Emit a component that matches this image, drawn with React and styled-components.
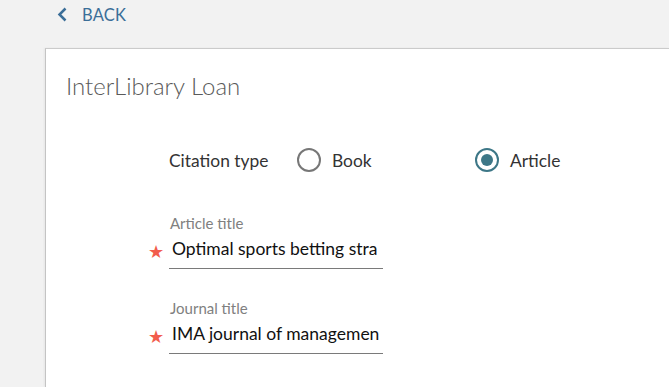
import styled, { createGlobalStyle } from 'styled-components';

const GlobalStyle = createGlobalStyle`
  html, body {
    margin: 0;
    padding: 0;
    background: #f2f2f2;
    font-family: Lato, "Open Sans", "Liberation Sans", sans-serif;
    overflow: hidden;
  }
`;

const Page = styled.div`
  width: 669px;
  height: 387px;
  display: flex;
  flex-direction: column;
`;

const BackBar = styled.div`
  height: 29px;
  padding-left: 57px;
  display: flex;
  align-items: center;
  gap: 14px;
  color: #3b6e98;
  font-size: 16.5px;
  letter-spacing: 0.2px;
`;

const Card = styled.div`
  flex: 1;
  margin: 19px 0 0 45px;
  background: #fff;
  border-top: 1px solid #cbcbcb;
  border-left: 1px solid #c4c4c4;
  box-shadow: -1px 0 2px rgba(0, 0, 0, 0.05);
  padding: 23px 0 0 20px;
`;

const Title = styled.h1`
  margin: 0;
  font-size: 24px;
  font-weight: 300;
  color: #5a5a5a;
  line-height: 28px;
`;

const Form = styled.div`
  margin: 46px 0 0 103px;
  display: flex;
  flex-direction: column;
`;

const CitationRow = styled.div`
  display: grid;
  grid-template-columns: 128px 178px auto;
  align-items: center;
  height: 28px;
  font-size: 17.4px;
  color: #333;
`;

const Option = styled.label`
  display: flex;
  align-items: center;
  gap: 11px;
`;

const Radio = styled.span`
  width: 24px;
  height: 24px;
  box-sizing: border-box;
  border-radius: 50%;
  border: 2px solid ${({ checked }) => (checked ? '#3d7787' : '#777')};
  display: flex;
  align-items: center;
  justify-content: center;
  &::after {
    content: '';
    width: 12px;
    height: 12px;
    border-radius: 50%;
    background: #3d7787;
    display: ${({ checked }) => (checked ? 'block' : 'none')};
  }
`;

const Field = styled.div`
  position: relative;
  width: 214px;
  margin-top: ${({ first }) => (first ? '41px' : '31px')};
`;

const FieldLabel = styled.div`
  font-size: 15px;
  color: #808080;
  padding-left: 1px;
  line-height: 17px;
`;

const Required = styled.span`
  position: absolute;
  left: -21px;
  bottom: 7px;
  color: #f25c4c;
  font-size: 18px;
`;

const Input = styled.div`
  margin-top: 6px;
  padding: 0 0 8px 3px;
  border-bottom: 1px solid #7a7a7a;
  font-size: 17.5px;
  line-height: 22px;
  color: #111;
  white-space: nowrap;
`;

const ChevronLeft = () => (
  <svg width="11" height="15" viewBox="0 0 11 15">
    <path d="M8.5 1.5 L2.5 7.5 L8.5 13.5" fill="none" stroke="#3b6e98" strokeWidth="2.5" />
  </svg>
);

const App = () => (
  <Page>
    <GlobalStyle />
    <BackBar>
      <ChevronLeft />
      BACK
    </BackBar>
    <Card>
      <Title>InterLibrary Loan</Title>
      <Form>
        <CitationRow>
          <span>Citation type</span>
          <Option>
            <Radio />
            Book
          </Option>
          <Option>
            <Radio checked />
            Article
          </Option>
        </CitationRow>
        <Field first>
          <FieldLabel>Article title</FieldLabel>
          <Required>★</Required>
          <Input>Optimal sports betting stra</Input>
        </Field>
        <Field>
          <FieldLabel>Journal title</FieldLabel>
          <Required>★</Required>
          <Input>IMA journal of managemen</Input>
        </Field>
      </Form>
    </Card>
  </Page>
);

export default App;
